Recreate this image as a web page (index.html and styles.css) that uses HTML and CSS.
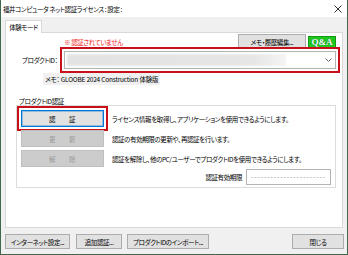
FILE: index.html
```html
<!DOCTYPE html>
<html lang="ja">
<head>
    <meta charset="UTF-8">
    <meta name="viewport" content="width=device-width, initial-scale=1.0">
    <title>ネット認証ライセンス : 設定</title>
    <link rel="stylesheet" href="styles.css">
</head>
<body>
    <div class="window">
        <div class="titlebar">
            <span class="title">福井コンピュータ ネット認証ライセンス : 設定 :</span>
            <svg class="close" width="8" height="8" viewBox="0 0 8 8">
                <path d="M0.5 0.5 L7.5 7.5 M7.5 0.5 L0.5 7.5" stroke="#333" stroke-width="1" fill="none"/>
            </svg>
        </div>
        <div class="dialog">
            <div class="tabs">
                <div class="tab">体験モード</div>
            </div>
            <div class="panel">
                <div class="top-row">
                    <span class="warn">※ 認証されていません</span>
                    <div class="top-buttons">
                        <button class="btn memo-btn">メモ・履歴編集...</button>
                        <button class="btn qa-btn">Q&amp;A</button>
                    </div>
                </div>
                <div class="product-row">
                    <label class="product-label">プロダクトID：</label>
                    <div class="combo marked">
                        <div class="combo-value"></div>
                        <svg class="chevron" width="7" height="4" viewBox="0 0 7 4">
                            <path d="M0.5 0.5 L3.5 3.5 L6.5 0.5" stroke="#666" stroke-width="1" fill="none"/>
                        </svg>
                    </div>
                </div>
                <div class="memo-row">
                    <span class="memo">メモ： GLOOBE 2024 Construction 体験版</span>
                </div>

                <div class="group-label">プロダクトID認証</div>
                <div class="group">
                    <div class="action-row">
                        <button class="btn action-btn default marked">認　証</button>
                        <span class="action-text">ライセンス情報を取得し、アプリケーションを使用できるようにします。</span>
                    </div>
                    <div class="action-row">
                        <button class="btn action-btn" disabled>更　新</button>
                        <span class="action-text">認証の有効期限の更新や、再認証を行います。</span>
                    </div>
                    <div class="action-row">
                        <button class="btn action-btn" disabled>解　除</button>
                        <span class="action-text">認証を解除し、他のPC/ユーザーでプロダクトIDを使用できるようにします。</span>
                    </div>
                    <div class="expire-row">
                        <span>認証有効期限</span>
                        <div class="expire-box">-----------------------</div>
                    </div>
                </div>
            </div>
            <div class="bottom-bar">
                <button class="btn net-btn">インターネット設定...</button>
                <button class="btn add-btn">追加認証...</button>
                <button class="btn import-btn">プロダクトIDのインポート...</button>
                <button class="btn close-btn">閉じる</button>
            </div>
        </div>
    </div>
</body>
</html>
```

FILE: styles.css
```css
body {
    margin: 0;
    font-family: "Noto Sans CJK JP", "Noto Sans", sans-serif;
    font-size: 6.5px;
    letter-spacing: -0.4px;
    font-feature-settings: "palt";
    white-space: nowrap;
    color: #000;
    background: #fff;
}
.window {
    width: 348px;
    height: 255px;
    box-sizing: border-box;
    border: 1px solid #41684f;
    border-top: none;
    background: #f0f0f0;
    display: flex;
    flex-direction: column;
}
.titlebar {
    height: 17px;
    background: #fff;
    display: flex;
    align-items: center;
    justify-content: space-between;
    padding: 0 5px 0 2px;
}
.dialog {
    flex: 1;
    display: flex;
    flex-direction: column;
    padding: 3px 4px 0 4px;
}
.tabs {
    display: flex;
}
.tab {
    width: 37px;
    height: 13px;
    box-sizing: border-box;
    border: 1px solid #d9d9d9;
    border-bottom: none;
    background: #fff;
    text-align: center;
    line-height: 12px;
    margin-bottom: -1px;
    position: relative;
    z-index: 1;
}
.panel {
    flex: 1;
    background: #fff;
    border: 1px solid #d9d9d9;
    padding: 1px 6px 0 6px;
}
.btn {
    font-family: inherit;
    font-size: 6.5px;
    letter-spacing: -0.4px;
    font-feature-settings: "palt";
    white-space: nowrap;
    background: #e1e1e1;
    border: 1px solid #adadad;
    color: #000;
    padding: 0;
    margin: 0;
    box-sizing: border-box;
}
.btn:disabled {
    background: #cccccc;
    border-color: #bfbfbf;
    color: #9a9a9a;
}
.marked {
    outline: 2px solid #c8101a;
    outline-offset: 2px;
}
.top-row {
    display: flex;
    justify-content: space-between;
    align-items: center;
    height: 15px;
}
.warn {
    color: #f01818;
    padding-left: 52px;
}
.top-buttons {
    display: flex;
    align-items: flex-end;
    gap: 2px;
    height: 15px;
}
.memo-btn {
    width: 68px;
    height: 15px;
}
.qa-btn {
    width: 28px;
    height: 13px;
    background: #22c822;
    border-color: #0f9a0f;
    color: #fff;
    font-family: "Liberation Serif", serif;
    font-weight: bold;
    font-size: 9px;
    letter-spacing: 0;
    line-height: 11px;
    text-shadow: 0 0 1px #064;
}
.product-row {
    display: flex;
    align-items: center;
    margin-top: 2px;
    padding-left: 10px;
}
.product-label {
    width: 42px;
}
.combo {
    width: 275px;
    height: 18px;
    box-sizing: border-box;
    border: 1px solid #b4b4b4;
    background: #fff;
    display: flex;
    align-items: center;
    justify-content: space-between;
    padding: 0 3px 0 2px;
}
.combo-value {
    width: 219px;
    height: 12px;
    background: linear-gradient(to right, #e3e3e3 0%, #e6e6e6 85%, #f4f4f4 100%);
    filter: blur(0.8px);
}
.memo-row {
    margin-top: 5px;
    padding-left: 31px;
}
.memo {
    background: #f0f0f0;
    padding: 1px 2px;
    letter-spacing: -0.2px;
}
.group-label {
    margin-top: 13px;
    padding-left: 7px;
    height: 8px;
    line-height: 8px;
}
.group {
    margin: 0 0 0 4px;
    border: 1px solid #dcdcdc;
    padding: 4px 4px 2px 4px;
    display: flex;
    flex-direction: column;
    gap: 3px;
}
.action-row {
    display: flex;
    align-items: center;
    gap: 8px;
}
.action-btn {
    width: 83px;
    height: 17px;
    letter-spacing: 3.5px;
    padding-left: 3px;
}
.action-btn.default {
    border-color: #0078d7;
    box-shadow: inset 0 0 0 1px rgba(0, 120, 215, 0.35);
}
.expire-row {
    display: flex;
    justify-content: flex-end;
    align-items: center;
    gap: 4px;
    margin-top: -1px;
}
.expire-box {
    width: 85px;
    height: 16px;
    box-sizing: border-box;
    border: 1px solid #b4b4b4;
    background: #fff;
    color: #777;
    text-align: center;
    line-height: 13px;
    letter-spacing: 1px;
}
.bottom-bar {
    height: 26px;
    display: flex;
    align-items: flex-start;
    padding-top: 6px;
    box-sizing: border-box;
}
.bottom-bar .btn {
    height: 15px;
}
.net-btn {
    width: 65px;
}
.add-btn {
    width: 46px;
    margin-left: 6px;
}
.import-btn {
    width: 82px;
    margin-left: 5px;
}
.close-btn {
    width: 52px;
    margin-left: auto;
    margin-right: -1px;
}
```
